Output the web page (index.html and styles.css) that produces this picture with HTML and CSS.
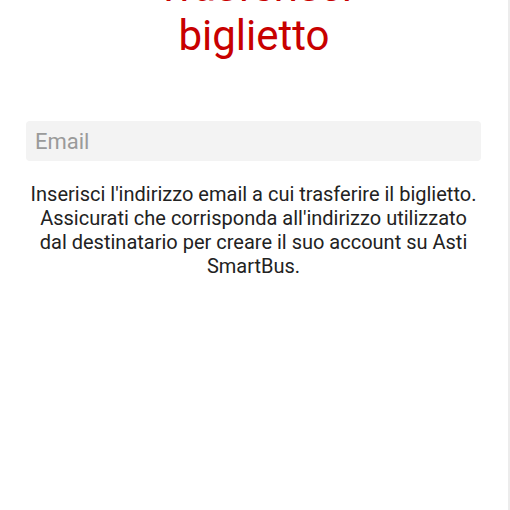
FILE: index.html
```html
<!DOCTYPE html>
<html lang="it">
<head>
<meta charset="utf-8">
<title>Trasferisci biglietto</title>
<link rel="stylesheet" href="styles.css">
</head>
<body>
<div class="page">
  <h1 class="title">Trasferisci<br>biglietto</h1>
  <div class="form">
    <input class="email" type="email" placeholder="Email">
    <p class="info">Inserisci l'indirizzo email a cui trasferire il biglietto. Assicurati che corrisponda all'indirizzo utilizzato dal destinatario per creare il suo account su Asti SmartBus.</p>
  </div>
</div>
</body>
</html>
```
FILE: styles.css
```css
html, body {
  margin: 0;
  padding: 0;
  background: #ffffff;
  overflow: hidden;
}
.page {
  width: 508px;
  height: 510px;
  border-right: 2px solid #ececec;
  font-family: Roboto, "Noto Sans", sans-serif;
  overflow: hidden;
}
.title {
  margin: -38px 0 0 0;
  font-size: 42px;
  font-weight: 400;
  line-height: 49px;
  color: #c80000;
  text-align: center;
}
.form {
  padding: 61px 27px 0 26px;
}
.email {
  display: block;
  box-sizing: border-box;
  width: 100%;
  height: 40px;
  border: none;
  border-radius: 4px;
  background: #f3f3f3;
  padding: 0 9px;
  font-family: Roboto, "Noto Sans", sans-serif;
  font-size: 22px;
  color: #222;
  outline: none;
}
.email::placeholder {
  color: #9a9a9a;
}
.info {
  margin: 21px 0 0 0;
  font-size: 20px;
  line-height: 24px;
  color: #222222;
  text-align: center;
}
```
